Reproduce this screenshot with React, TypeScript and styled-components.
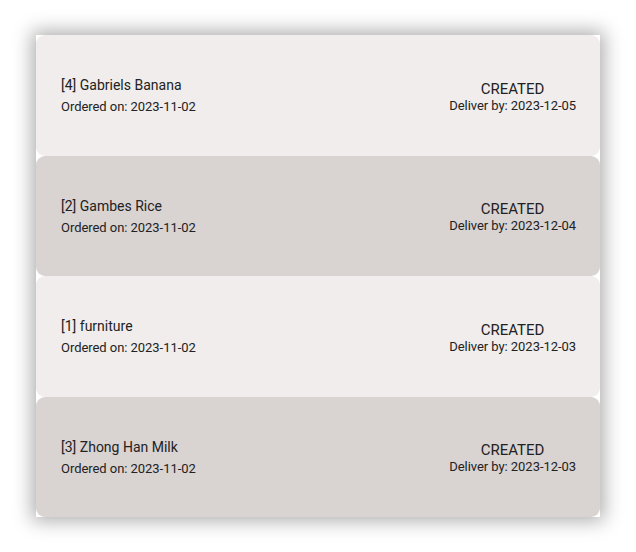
import { FC } from "react";
import styled, { createGlobalStyle } from "styled-components";

type Order = {
  id: number;
  name: string;
  ordered: string;
  deliver: string;
  status: string;
};

const orders: Order[] = [
  { id: 4, name: "Gabriels Banana", ordered: "2023-11-02", deliver: "2023-12-05", status: "CREATED" },
  { id: 2, name: "Gambes Rice", ordered: "2023-11-02", deliver: "2023-12-04", status: "CREATED" },
  { id: 1, name: "furniture", ordered: "2023-11-02", deliver: "2023-12-03", status: "CREATED" },
  { id: 3, name: "Zhong Han Milk", ordered: "2023-11-02", deliver: "2023-12-03", status: "CREATED" },
];

const GlobalStyle = createGlobalStyle`
  html, body {
    margin: 0;
    padding: 0;
    background: #ffffff;
  }
  body {
    font-family: Roboto, "Noto Sans", sans-serif;
    color: #222222;
  }
`;

const App: FC = () => {
  return (
    <>
      <GlobalStyle />
      <Page>
        <OrderList>
          {orders.map((order, i) => (
            <OrderRow key={order.id} dark={i % 2 === 1}>
              <LeftInfo>
                <Title>
                  [{order.id}] {order.name}
                </Title>
                <SubText>Ordered on: {order.ordered}</SubText>
              </LeftInfo>
              <RightInfo>
                <Status>{order.status}</Status>
                <SubText>Deliver by: {order.deliver}</SubText>
              </RightInfo>
            </OrderRow>
          ))}
        </OrderList>
      </Page>
    </>
  );
};

const Page = styled.div`
  padding: 35px 36px 35px 36px;
  width: 636px;
  box-sizing: border-box;
`;

const OrderList = styled.div`
  width: 564px;
  height: 482px;
  display: flex;
  flex-direction: column;
  background: #ffffff;
  box-shadow: 0 0 18px 4px rgba(0, 0, 0, 0.32);
`;

const OrderRow = styled.div<{ dark?: boolean }>`
  flex: 1;
  display: flex;
  align-items: center;
  justify-content: space-between;
  padding: 0 24px 0 25px;
  border-radius: 9px;
  background: ${(props) => (props.dark ? "#d9d3d2" : "#f0edec")};
`;

const LeftInfo = styled.div`
  display: flex;
  flex-direction: column;
  gap: 5px;
  margin-top: 2px;
`;

const RightInfo = styled.div`
  display: flex;
  flex-direction: column;
  align-items: center;
  margin-top: 4px;
`;

const Title = styled.div`
  font-size: 14px;
  line-height: 17px;
`;

const Status = styled.div`
  font-size: 15px;
  line-height: 17px;
`;

const SubText = styled.div`
  font-size: 13px;
  line-height: 16px;
  letter-spacing: -0.05px;
`;

export default App;
